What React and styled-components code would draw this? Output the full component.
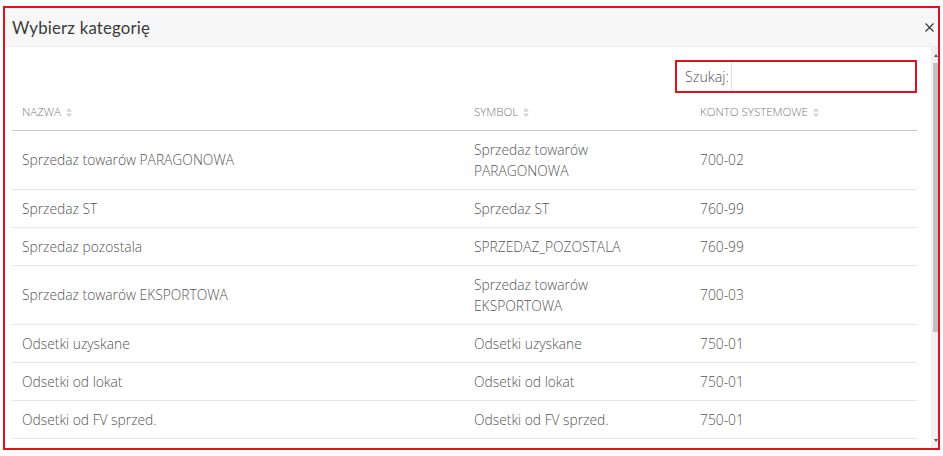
import styled, { createGlobalStyle } from "styled-components";

const GlobalStyle = createGlobalStyle`
  html, body {
    margin: 0;
    padding: 0;
    background: #ffffff;
  }
  body {
    font-family: "Open Sans", "Liberation Sans", sans-serif;
  }
  * {
    box-sizing: border-box;
  }
`;

const rows = [
  { name: "Sprzedaz towarów PARAGONOWA", symbol: "Sprzedaz towarów PARAGONOWA", account: "700-02" },
  { name: "Sprzedaz ST", symbol: "Sprzedaz ST", account: "760-99" },
  { name: "Sprzedaz pozostala", symbol: "SPRZEDAZ_POZOSTALA", account: "760-99" },
  { name: "Sprzedaz towarów EKSPORTOWA", symbol: "Sprzedaz towarów EKSPORTOWA", account: "700-03" },
  { name: "Odsetki uzyskane", symbol: "Odsetki uzyskane", account: "750-01" },
  { name: "Odsetki od lokat", symbol: "Odsetki od lokat", account: "750-01" },
  { name: "Odsetki od FV sprzed.", symbol: "Odsetki od FV sprzed.", account: "750-01" },
];

const columns = [
  { label: "Nazwa", width: "452px" },
  { label: "Symbol", width: "226px" },
  { label: "Konto systemowe", width: "227px" },
];

const SortIcon = () => (
  <StyledSortIcon width="6" height="9" viewBox="0 0 6 9">
    <path d="M3 0 L6 3.5 L0 3.5 Z" fill="#d2d2d2" />
    <path d="M3 9 L6 5.5 L0 5.5 Z" fill="#d2d2d2" />
  </StyledSortIcon>
);

const CloseIcon = () => (
  <svg width="9" height="9" viewBox="0 0 9 9">
    <path d="M0.5 0.5 L8.5 8.5 M8.5 0.5 L0.5 8.5" stroke="#333" strokeWidth="1.1" fill="none" />
  </svg>
);

const App = () => {
  return (
    <>
      <GlobalStyle />
      <StyledModal>
        <StyledHeader>
          <StyledTitle>Wybierz kategorię</StyledTitle>
          <StyledCloseButton type="button">
            <CloseIcon />
          </StyledCloseButton>
        </StyledHeader>
        <StyledBody>
          <StyledContent>
            <StyledSearchRow>
              <StyledSearchBox>
                <StyledSearchLabel>Szukaj:</StyledSearchLabel>
                <StyledSearchInput type="text" />
              </StyledSearchBox>
            </StyledSearchRow>
            <StyledTable>
              <colgroup>
                {columns.map((col) => (
                  <col key={col.label} style={{ width: col.width }} />
                ))}
              </colgroup>
              <thead>
                <tr>
                  {columns.map((col) => (
                    <StyledHeadCell key={col.label}>
                      {col.label}
                      <SortIcon />
                    </StyledHeadCell>
                  ))}
                </tr>
              </thead>
              <tbody>
                {rows.map((row, i) => (
                  <tr key={i}>
                    <StyledCell>{row.name}</StyledCell>
                    <StyledCell $narrow>{row.symbol}</StyledCell>
                    <StyledCell>{row.account}</StyledCell>
                  </tr>
                ))}
              </tbody>
            </StyledTable>
          </StyledContent>
          <StyledScrollTrack>
            <StyledScrollButton>
              <StyledArrow $dir="up" />
            </StyledScrollButton>
            <StyledScrollThumb />
            <StyledScrollSpacer />
            <StyledScrollButton>
              <StyledArrow $dir="down" />
            </StyledScrollButton>
          </StyledScrollTrack>
        </StyledBody>
      </StyledModal>
    </>
  );
};

const StyledModal = styled.div`
  margin: 6px 0 0 3px;
  width: 937px;
  height: 444px;
  border: 2px solid #e3111c;
  display: flex;
  flex-direction: column;
  overflow: hidden;
  background: #fff;
`;

const StyledHeader = styled.div`
  height: 39px;
  flex-shrink: 0;
  background: #f7f7f7;
  border-bottom: 1px solid #ececec;
  display: flex;
  align-items: center;
  justify-content: space-between;
  padding: 0 4px 0 7px;
`;

const StyledTitle = styled.h4`
  margin: 0;
  font-family: "Lato", "Noto Sans", sans-serif;
  font-size: 16.8px;
  font-weight: 400;
  color: #3a3a3a;
  letter-spacing: 0.2px;
`;

const StyledCloseButton = styled.button`
  border: 0;
  background: transparent;
  padding: 0;
  width: 10px;
  height: 12px;
  display: flex;
  align-items: center;
  justify-content: center;
  cursor: pointer;
`;

const StyledBody = styled.div`
  flex: 1;
  display: flex;
  min-height: 0;
`;

const StyledContent = styled.div`
  flex: 1;
  padding: 13px 14px 0 7px;
  overflow: hidden;
`;

const StyledSearchRow = styled.div`
  display: flex;
  justify-content: flex-end;
`;

const StyledSearchBox = styled.label`
  width: 242px;
  height: 33px;
  border: 2px solid #e3111c;
  display: flex;
  align-items: center;
  padding-left: 8px;
`;

const StyledSearchLabel = styled.span`
  font-size: 14.3px;
  font-weight: 300;
  color: #555;
  margin-right: 2px;
`;

const StyledSearchInput = styled.input`
  flex: 1;
  height: 100%;
  border: 0;
  border-left: 1px solid #e2e2e2;
  outline: none;
  background: transparent;
  min-width: 0;
`;

const StyledTable = styled.table`
  width: 100%;
  border-collapse: collapse;
  table-layout: fixed;
`;

const StyledHeadCell = styled.th`
  height: 37px;
  padding: 0 10px;
  text-align: left;
  vertical-align: middle;
  font-size: 11.5px;
  font-weight: 300;
  text-transform: uppercase;
  color: #7a7a7a;
  border-bottom: 1px solid #c6c6c6;
  white-space: nowrap;
`;

const StyledSortIcon = styled.svg`
  margin-left: 5px;
  vertical-align: -1px;
`;

const StyledCell = styled.td`
  padding: 8px ${(props) => (props.$narrow ? "24px" : "10px")} 8px 10px;
  line-height: 21px;
  font-size: 13.8px;
  font-weight: 300;
  color: #555;
  border-bottom: 1px solid #e6e6e6;
  vertical-align: middle;
`;

const StyledScrollTrack = styled.div`
  width: 7px;
  flex-shrink: 0;
  background: #f1f1f1;
  display: flex;
  flex-direction: column;
`;

const StyledScrollButton = styled.div`
  height: 16px;
  display: flex;
  align-items: center;
  padding-left: 3px;
`;

const StyledArrow = styled.span`
  width: 0;
  height: 0;
  border-left: 2.5px solid transparent;
  border-right: 2.5px solid transparent;
  ${(props) =>
    props.$dir === "up"
      ? "border-bottom: 3px solid #555;"
      : "border-top: 3px solid #555;"}
`;

const StyledScrollThumb = styled.div`
  height: 269px;
  margin-left: 2px;
  background: #c1c1c1;
`;

const StyledScrollSpacer = styled.div`
  flex: 1;
`;

export default App;
